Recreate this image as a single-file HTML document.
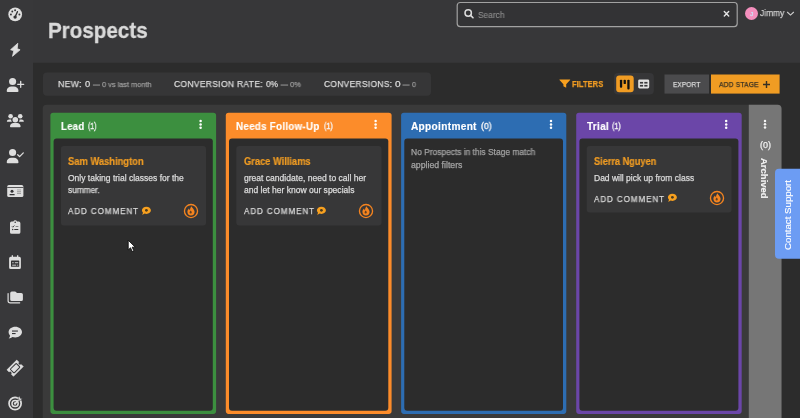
<!DOCTYPE html>
<html lang="en">
<head>
<meta charset="utf-8">
<title>Prospects</title>
<style>
*{box-sizing:border-box;margin:0;padding:0}
html,body{width:800px;height:418px;overflow:hidden;background:#2c2c2c}
body{position:relative;font-family:"Liberation Sans",sans-serif;color:#dcdcdc}
.abs{position:absolute}
.t{position:absolute;white-space:nowrap;line-height:1;transform-origin:0 50%;will-change:transform}
</style>
</head>
<body>
<svg class="abs" style="left:0;top:0" width="800" height="418" viewBox="0 0 800 418">
<rect x="0" y="0" width="800" height="418" fill="#2c2c2c"/>
<rect x="33" y="0" width="767" height="62.8" fill="#373739"/>
<rect x="0" y="0" width="33" height="418" fill="#38383a"/>
<rect x="457.2" y="2.5" width="280" height="24.1" rx="3" fill="#333335" stroke="#a2a2a2" stroke-width="1.2"/>
<rect x="43" y="72.5" width="388" height="23.2" rx="4" fill="#363637"/>
<rect x="614" y="73" width="39.8" height="21.5" rx="4" fill="#363638"/>
<rect x="616.2" y="75.6" width="17.5" height="16.7" rx="3" fill="#f09c23"/>
<rect x="664.5" y="74.5" width="44.5" height="19.1" fill="#4b4b4d"/>
<rect x="711" y="74.5" width="68.6" height="19.1" fill="#f09c23"/>
<path d="M42.7 418 V108.8 a4 4 0 0 1 4 -4 H777.5 a4 4 0 0 1 4 4 V418 Z" fill="#3a3a3a"/>
<path d="M748.8 418 V104.8 H777.5 a4 4 0 0 1 4 4 V418 Z" fill="#767676"/>
<rect x="92.9" y="84.55" width="7.1" height="1" fill="#9a9a9a"/>
<rect x="280.6" y="84.55" width="7.5" height="1" fill="#9a9a9a"/>
<rect x="402.5" y="84.55" width="7.1" height="1" fill="#9a9a9a"/>
<rect x="50.4" y="112.8" width="165.7" height="301.1" rx="2.8" fill="#3c8f3f"/>
<rect x="53.6" y="138.4" width="159.2" height="272.35" rx="3" fill="#2c2c2c"/>
<circle cx="200.6" cy="121" r="1.25" fill="#fff"/>
<circle cx="200.6" cy="124.4" r="1.25" fill="#fff"/>
<circle cx="200.6" cy="127.8" r="1.25" fill="#fff"/>
<rect x="60.9" y="145.9" width="145.1" height="79.6" rx="3" fill="#373738"/>
<rect x="225.8" y="112.8" width="165.8" height="301.1" rx="2.8" fill="#fc8c2a"/>
<rect x="229" y="138.4" width="159.3" height="272.35" rx="3" fill="#2c2c2c"/>
<circle cx="375.6" cy="121" r="1.25" fill="#fff"/>
<circle cx="375.6" cy="124.4" r="1.25" fill="#fff"/>
<circle cx="375.6" cy="127.8" r="1.25" fill="#fff"/>
<rect x="236.3" y="145.9" width="145.2" height="79.6" rx="3" fill="#373738"/>
<rect x="401.1" y="112.8" width="165.2" height="301.1" rx="2.8" fill="#2d6db2"/>
<rect x="404.3" y="138.4" width="158.7" height="272.35" rx="3" fill="#2c2c2c"/>
<circle cx="551" cy="121" r="1.25" fill="#fff"/>
<circle cx="551" cy="124.4" r="1.25" fill="#fff"/>
<circle cx="551" cy="127.8" r="1.25" fill="#fff"/>
<rect x="576.2" y="112.8" width="165.5" height="301.1" rx="2.8" fill="#6b46a8"/>
<rect x="579.4" y="138.4" width="159" height="272.35" rx="3" fill="#2c2c2c"/>
<circle cx="726.2" cy="121" r="1.25" fill="#fff"/>
<circle cx="726.2" cy="124.4" r="1.25" fill="#fff"/>
<circle cx="726.2" cy="127.8" r="1.25" fill="#fff"/>
<rect x="586.7" y="145.9" width="144.9" height="66.5" rx="3" fill="#373738"/>
<circle cx="765" cy="121" r="1.25" fill="#f4f4f4"/>
<circle cx="765" cy="124.3" r="1.25" fill="#f4f4f4"/>
<circle cx="765" cy="127.6" r="1.25" fill="#f4f4f4"/>
<rect x="775" y="168.8" width="29" height="90" rx="4" fill="#6c9cf3"/>
</svg>
<svg class="abs" id="sbicons" style="left:0;top:0" width="33" height="418" viewBox="0 0 33 418">
<g fill="#dedede" stroke="none">
<circle cx="15.2" cy="14.4" r="6.85"/>
<g fill="#333335"><circle cx="10.9" cy="14.5" r=".95"/><circle cx="12.3" cy="11.5" r=".95"/><circle cx="15.1" cy="10.3" r=".95"/><circle cx="19.4" cy="14.5" r=".95"/><circle cx="15.1" cy="17.1" r="1.7"/></g>
<path d="M15.1 17 L17.4 11.7" stroke="#333335" stroke-width="1.4" stroke-linecap="round"/>
<path d="M17.8 43.3 L10.6 49.7 L13.8 50.7 L12.5 56.3 L20.1 49.8 L17.2 48.7 Z" stroke="#dedede" stroke-width=".8" stroke-linejoin="round"/>
<circle cx="12.6" cy="81.5" r="3.55"/>
<path d="M6.7 91 c0 -3 2.2 -4.5 4.7 -4.5 h2.4 c2.5 0 4.7 1.5 4.7 4.5 a1 1 0 0 1 -1 1 h-9.8 a1 1 0 0 1 -1 -1 Z"/>
<path d="M20.7 81.3 v6 M17.7 84.3 h6" stroke="#dedede" stroke-width="1.3" fill="none" stroke-linecap="round"/>
<circle cx="10.6" cy="116.2" r="2.3"/><circle cx="20.2" cy="116.2" r="2.3"/><circle cx="15.3" cy="119.7" r="2.8"/>
<path d="M6.8 121.8 a2.4 2.4 0 0 1 2.4 -2.4 h1.9 a3.9 3.9 0 0 0 .8 2.4 Z"/>
<path d="M23.9 121.8 a2.4 2.4 0 0 0 -2.4 -2.4 h-1.9 a3.9 3.9 0 0 1 -.8 2.4 Z"/>
<path d="M10 126.6 c0 -2.3 1.6 -3.6 3.5 -3.6 h3.6 c1.9 0 3.5 1.3 3.5 3.6 a.7 .7 0 0 1 -.7 .7 h-9.2 a.7 .7 0 0 1 -.7 -.7 Z"/>
<circle cx="12.6" cy="152.5" r="3.55"/>
<path d="M6.7 162.3 c0 -3 2.2 -4.5 4.7 -4.5 h2.4 c2.5 0 4.7 1.5 4.7 4.5 a1 1 0 0 1 -1 1 h-9.8 a1 1 0 0 1 -1 -1 Z"/>
<path d="M17.7 154.7 l1.9 1.9 l3.7 -3.7" stroke="#dedede" stroke-width="1.3" fill="none" stroke-linecap="round" stroke-linejoin="round"/>
<rect x="7.2" y="185" width="16.2" height="12.1" rx="1.7"/>
<g fill="#333335"><rect x="7.2" y="187.2" width="16.2" height=".8"/><circle cx="12" cy="191.3" r="1.5"/><rect x="9.5" y="194" width="5.2" height="1.3" rx=".5"/><rect x="17" y="189.6" width="4" height=".7" opacity=".45"/><rect x="17" y="191.2" width="4" height=".7" opacity=".45"/><rect x="17" y="192.8" width="4" height=".8" opacity=".6"/></g>
<path d="M11.6 221.6 h1.8 a1.9 1.9 0 0 1 3.6 0 h1.8 a1.6 1.6 0 0 1 1.6 1.6 v9 a1.6 1.6 0 0 1 -1.6 1.6 h-7.2 a1.6 1.6 0 0 1 -1.6 -1.6 v-9 a1.6 1.6 0 0 1 1.6 -1.6 Z"/>
<g fill="#333335"><circle cx="15.2" cy="222.2" r=".8"/><rect x="15.6" y="226" width="2.8" height=".9" opacity=".6"/><rect x="14.3" y="229" width="4" height="1"/><circle cx="12.7" cy="229.5" r=".7"/></g>
<path d="M12 226.4 l.8 .8 l1.6 -1.7" stroke="#333335" stroke-width=".9" fill="none"/>
<path d="M11.7 255.2 h1.3 v1.6 h4 v-1.6 h1.3 v1.6 h1 a1.6 1.6 0 0 1 1.6 1.6 v9 a1.6 1.6 0 0 1 -1.6 1.6 h-8.6 a1.6 1.6 0 0 1 -1.6 -1.6 v-9 a1.6 1.6 0 0 1 1.6 -1.6 h1 Z"/>
<rect x="11" y="260.6" width="8.2" height="6.2" rx=".6" fill="#333335"/>
<g fill="#dedede"><rect x="12.2" y="262.3" width="1.5" height=".9"/><rect x="14.8" y="262.3" width="3.4" height=".9"/><rect x="12.2" y="264.7" width="4" height=".9"/><rect x="17.2" y="264.7" width="1" height=".9"/></g>
<path d="M11.8 291.6 h3.2 a1.4 1.4 0 0 1 1 .4 l.9 .9 h4.4 a1.6 1.6 0 0 1 1.6 1.6 v4.9 a1.6 1.6 0 0 1 -1.6 1.6 h-9.5 a1.6 1.6 0 0 1 -1.6 -1.6 v-6.2 a1.6 1.6 0 0 1 1.6 -1.6 Z"/>
<path d="M8.1 293.5 v7.2 a2.1 2.1 0 0 0 2.1 2.1 h9.5" stroke="#dedede" stroke-width="1.2" fill="none" stroke-linecap="round"/>
<path d="M15.3 326.7 c3.7 0 6.7 2.4 6.7 5.4 s-3 5.4 -6.7 5.4 c-1 0 -2 -.2 -2.9 -.5 c-.9 .7 -2.2 1.4 -3.7 1.4 c.7 -.8 1.2 -1.8 1.4 -2.7 c-.9 -.9 -1.5 -2.2 -1.5 -3.6 c0 -3 3 -5.4 6.7 -5.4 Z"/>
<g fill="#333335"><rect x="12" y="330.5" width="5.9" height="1.1"/><rect x="12" y="333" width="3.6" height="1.1"/></g>
<g transform="translate(15.1 368.2) rotate(-45)">
<path d="M-6.9 -4.6 h13.8 v2.9 a1.7 1.7 0 0 0 0 3.4 v2.9 h-13.8 v-2.9 a1.7 1.7 0 0 0 0 -3.4 Z" stroke="#dedede" stroke-width=".6" stroke-linejoin="round"/>
<rect x="-4.2" y="-2.7" width="8.4" height="5.4" rx=".7" fill="#dedede" stroke="#333335" stroke-width="1"/>
</g>
<circle cx="15.1" cy="403.5" r="6.05" fill="none" stroke="#dedede" stroke-width="1.7"/>
<circle cx="15.1" cy="403.5" r="3.1" fill="none" stroke="#dedede" stroke-width="1.5"/>
<circle cx="15.1" cy="403.5" r="1.2"/>
<path d="M15.1 403.5 L19 399.6" stroke="#dedede" stroke-width="1.5"/>
<path d="M18.1 397.6 l1.5 -1.5 l.6 2.1 l2.1 .6 l-1.5 1.5 l-2.4 -.3 Z" stroke="#39393b" stroke-width=".5"/>
</g>
</svg>

<div class="t" style="left:47.6px;top:19.82px;font-size:22.3px;color:#dadada;font-weight:bold;-webkit-text-stroke:0.3px #dadada;transform:scaleX(0.924);">Prospects</div>
<svg class="abs" style="left:462px;top:8px" width="13" height="13" viewBox="0 0 13 13"><circle cx="6.2" cy="5" r="3.2" fill="none" stroke="#dcdcdc" stroke-width="1.5"/><path d="M8.6 7.4 L11 9.8" stroke="#dcdcdc" stroke-width="1.6" stroke-linecap="round"/></svg>
<div class="t" style="left:477.8px;top:11.05px;font-size:8.8px;color:#8e8e8e;-webkit-text-stroke:0.1px #8e8e8e;transform:scaleX(0.951);">Search</div>
<svg class="abs" style="left:722px;top:9px" width="10" height="10" viewBox="0 0 10 10"><path d="M2.3 2.6 L6.7 7 M6.7 2.6 L2.3 7" stroke="#e4e4e4" stroke-width="1.4" stroke-linecap="round"/></svg>
<div class="abs" style="left:745px;top:6.800px;width:13px;height:13px;border-radius:50%;background:#f48fbd"></div>
<div class="t" style="left:750px;top:10.52px;font-size:6px;color:#cfd8f0;font-weight:bold;-webkit-text-stroke:0.25px #cfd8f0;">J</div>
<div class="t" style="left:759.8px;top:8.81px;font-size:9.2px;color:#d2d2d2;-webkit-text-stroke:0.25px #d2d2d2;transform:scaleX(0.912);">Jimmy</div>
<svg class="abs" style="left:786px;top:10.3px" width="9" height="7" viewBox="0 0 9 7"><path d="M1.2 2 L4.5 5.1 L7.8 2" fill="none" stroke="#d0d0d0" stroke-width="1.1"/></svg>
<div class="t" style="left:57.8px;top:79.6px;font-size:9.1px;color:#dcdcdc;letter-spacing:0.3px;-webkit-text-stroke:0.25px #dcdcdc;transform:scaleX(0.960);">NEW:</div>
<div class="t" style="left:85.4px;top:79.6px;font-size:9.1px;color:#dcdcdc;-webkit-text-stroke:0.25px #dcdcdc;transform:scaleX(1.027);">0</div>
<div class="t" style="left:101.8px;top:80.83px;font-size:8px;color:#9a9a9a;-webkit-text-stroke:0.25px #9a9a9a;transform:scaleX(0.920);">0 vs last month</div>
<div class="t" style="left:173.7px;top:79.6px;font-size:9.1px;color:#dcdcdc;letter-spacing:0.3px;-webkit-text-stroke:0.25px #dcdcdc;transform:scaleX(0.940);">CONVERSION RATE:</div>
<div class="t" style="left:266.1px;top:79.6px;font-size:9.1px;color:#dcdcdc;-webkit-text-stroke:0.25px #dcdcdc;transform:scaleX(0.912);">0%</div>
<div class="t" style="left:289.8px;top:80.83px;font-size:8px;color:#9a9a9a;-webkit-text-stroke:0.25px #9a9a9a;transform:scaleX(0.934);">0%</div>
<div class="t" style="left:323.5px;top:79.6px;font-size:9.1px;color:#dcdcdc;letter-spacing:0.3px;-webkit-text-stroke:0.25px #dcdcdc;transform:scaleX(0.931);">CONVERSIONS:</div>
<div class="t" style="left:394.8px;top:79.6px;font-size:9.1px;color:#dcdcdc;-webkit-text-stroke:0.25px #dcdcdc;transform:scaleX(1.106);">0</div>
<div class="t" style="left:411.7px;top:80.83px;font-size:8px;color:#9a9a9a;-webkit-text-stroke:0.25px #9a9a9a;transform:scaleX(0.876);">0</div>
<svg class="abs" style="left:559px;top:79px" width="12" height="10" viewBox="0 0 12 10"><path d="M.8 .4 h10 a.4 .4 0 0 1 .3 .7 L7.2 5.2 V8.8 L4.4 7.3 V5.2 L.5 1.1 a.4 .4 0 0 1 .3 -.7 Z" fill="#f7a01f"/></svg>
<div class="t" style="left:571.8px;top:79.8px;font-size:9.1px;color:#f09c23;font-weight:bold;-webkit-text-stroke:0.25px #f09c23;transform:scaleX(0.841);">FILTERS</div>
<svg class="abs" style="left:616px;top:75.500px" width="18" height="17" viewBox="0 0 18 17"><g fill="#111"><rect x="3.9" y="3.7" width="2.3" height="8" rx=".9"/><rect x="7.6" y="3.7" width="2.3" height="4.4" rx=".9"/><rect x="11.3" y="3.7" width="2.3" height="9.7" rx=".9"/></g></svg>
<svg class="abs" style="left:638px;top:79px" width="12" height="10" viewBox="0 0 12 10"><rect x=".2" y=".4" width="11" height="9" rx="1.4" fill="#e2e2e2"/><g fill="#3a3a3c"><rect x="1.9" y="2.9" width="3.2" height="1.7"/><rect x="6.3" y="2.9" width="3.2" height="1.7"/><rect x="1.9" y="5.9" width="3.2" height="1.7"/><rect x="6.3" y="5.9" width="3.2" height="1.7"/></g></svg>
<div class="t" style="left:672.8px;top:81.07px;font-size:7.6px;color:#dcdcdc;letter-spacing:0.3px;-webkit-text-stroke:0.25px #dcdcdc;transform:scaleX(0.835);">EXPORT</div>
<div class="t" style="left:719.4px;top:81.07px;font-size:7.6px;color:#352f24;letter-spacing:0.2px;-webkit-text-stroke:0.25px #352f24;transform:scaleX(0.881);">ADD STAGE</div>
<svg class="abs" style="left:762.1px;top:79.5px" width="9" height="9" viewBox="0 0 9 9"><path d="M4.5 1 V8 M1 4.5 H8" stroke="#352f24" stroke-width="1.4"/></svg>
<div class="t" style="left:60.7px;top:121.84px;font-size:10px;color:#fff;font-weight:bold;letter-spacing:0.3px;-webkit-text-stroke:0.15px #fff;transform:scaleX(0.953);">Lead</div>
<div class="t" style="left:87.8px;top:121.68px;font-size:9px;color:#f6f6f6;-webkit-text-stroke:0.35px #f6f6f6;transform:scaleX(0.764);">(1)</div>
<div class="t" style="left:68.2px;top:156.94px;font-size:10px;color:#f09c23;font-weight:bold;-webkit-text-stroke:0.2px #f09c23;transform:scaleX(0.936);">Sam Washington</div>
<div class="t" style="left:68.2px;top:174.2px;font-size:8.5px;color:#dcdcdc;-webkit-text-stroke:0.25px #dcdcdc;transform:scaleX(1.0);">Only taking trial classes for the</div>
<div class="t" style="left:68.2px;top:186.4px;font-size:8.5px;color:#dcdcdc;-webkit-text-stroke:0.25px #dcdcdc;transform:scaleX(0.976);">summer.</div>
<div class="t" style="left:68.2px;top:207.1px;font-size:8.5px;color:#d8d8d8;letter-spacing:1px;-webkit-text-stroke:0.25px #d8d8d8;transform:scaleX(0.943);">ADD COMMENT</div>
<svg class="abs" style="left:140.7px;top:206.3px" width="11" height="10" viewBox="0 0 11 10"><path d="M5.4 .7 c2.5 0 4.5 1.6 4.5 3.6 s-2 3.6 -4.5 3.6 c-.6 0 -1.2 -.1 -1.7 -.3 c-.7 .6 -1.6 1 -2.7 1.1 c.5 -.6 .9 -1.3 1 -2 c-.7 -.6 -1.1 -1.5 -1.1 -2.4 c0 -2 2 -3.6 4.5 -3.6 Z" fill="#f7a01f"/><circle cx="5.4" cy="4.3" r="1.4" fill="#4a3a20"/></svg>
<svg class="abs" style="left:182.9px;top:203.2px" width="16" height="16" viewBox="0 0 16 16"><circle cx="8" cy="8" r="6.550" fill="none" stroke="#f5841f" stroke-width="1.350"/><path d="M8.5 3.2 c.5 1.8 3.1 3 3.1 5.6 a3.6 3.6 0 0 1 -7.2 0 c0 -1.5 .7 -2.5 1.6 -3.3 c.1 .9 .5 1.4 1 1.7 c.1 -1.5 .5 -2.9 1.5 -4 Z" fill="#f5841f"/><path d="M7.7 7.4 c.7 .8 1.1 1.3 1.1 2 a1.1 1.1 0 0 1 -2.2 0 c0 -.7 .5 -1.2 1.1 -2 Z" fill="#3a3026" opacity=".8"/></svg>
<div class="t" style="left:236.1px;top:121.84px;font-size:10px;color:#fff;font-weight:bold;letter-spacing:0.3px;-webkit-text-stroke:0.15px #fff;transform:scaleX(0.976);">Needs Follow-Up</div>
<div class="t" style="left:323.5px;top:121.68px;font-size:9px;color:#f6f6f6;-webkit-text-stroke:0.35px #f6f6f6;transform:scaleX(0.8);">(1)</div>
<div class="t" style="left:243.6px;top:156.94px;font-size:10px;color:#f09c23;font-weight:bold;-webkit-text-stroke:0.2px #f09c23;transform:scaleX(0.930);">Grace Williams</div>
<div class="t" style="left:243.6px;top:174.2px;font-size:8.5px;color:#dcdcdc;-webkit-text-stroke:0.25px #dcdcdc;transform:scaleX(1.005);">great candidate, need to call her</div>
<div class="t" style="left:243.6px;top:186.4px;font-size:8.5px;color:#dcdcdc;-webkit-text-stroke:0.25px #dcdcdc;transform:scaleX(1.003);">and let her know our specials</div>
<div class="t" style="left:243.6px;top:207.1px;font-size:8.5px;color:#d8d8d8;letter-spacing:1px;-webkit-text-stroke:0.25px #d8d8d8;transform:scaleX(0.943);">ADD COMMENT</div>
<svg class="abs" style="left:316.1px;top:206.3px" width="11" height="10" viewBox="0 0 11 10"><path d="M5.4 .7 c2.5 0 4.5 1.6 4.5 3.6 s-2 3.6 -4.5 3.6 c-.6 0 -1.2 -.1 -1.7 -.3 c-.7 .6 -1.6 1 -2.7 1.1 c.5 -.6 .9 -1.3 1 -2 c-.7 -.6 -1.1 -1.5 -1.1 -2.4 c0 -2 2 -3.6 4.5 -3.6 Z" fill="#f7a01f"/><circle cx="5.4" cy="4.3" r="1.4" fill="#4a3a20"/></svg>
<svg class="abs" style="left:358.3px;top:203.2px" width="16" height="16" viewBox="0 0 16 16"><circle cx="8" cy="8" r="6.550" fill="none" stroke="#f5841f" stroke-width="1.350"/><path d="M8.5 3.2 c.5 1.8 3.1 3 3.1 5.6 a3.6 3.6 0 0 1 -7.2 0 c0 -1.5 .7 -2.5 1.6 -3.3 c.1 .9 .5 1.4 1 1.7 c.1 -1.5 .5 -2.9 1.5 -4 Z" fill="#f5841f"/><path d="M7.7 7.4 c.7 .8 1.1 1.3 1.1 2 a1.1 1.1 0 0 1 -2.2 0 c0 -.7 .5 -1.2 1.1 -2 Z" fill="#3a3026" opacity=".8"/></svg>
<div class="t" style="left:411.4px;top:121.84px;font-size:10px;color:#fff;font-weight:bold;letter-spacing:0.3px;-webkit-text-stroke:0.15px #fff;transform:scaleX(1.013);">Appointment</div>
<div class="t" style="left:480.6px;top:121.68px;font-size:9px;color:#f6f6f6;-webkit-text-stroke:0.35px #f6f6f6;transform:scaleX(0.964);">(0)</div>
<div class="t" style="left:411.4px;top:148.3px;font-size:8.5px;color:#a4a4a4;-webkit-text-stroke:0.25px #a4a4a4;transform:scaleX(0.988);">No Prospects in this Stage match</div>
<div class="t" style="left:411.4px;top:161.2px;font-size:8.5px;color:#a4a4a4;-webkit-text-stroke:0.25px #a4a4a4;transform:scaleX(1.028);">applied filters</div>
<div class="t" style="left:586.5px;top:121.84px;font-size:10px;color:#fff;font-weight:bold;letter-spacing:0.3px;-webkit-text-stroke:0.15px #fff;transform:scaleX(0.992);">Trial</div>
<div class="t" style="left:611.9px;top:121.68px;font-size:9px;color:#f6f6f6;-webkit-text-stroke:0.35px #f6f6f6;transform:scaleX(0.791);">(1)</div>
<div class="t" style="left:594px;top:156.94px;font-size:10px;color:#f09c23;font-weight:bold;-webkit-text-stroke:0.2px #f09c23;transform:scaleX(0.917);">Sierra Nguyen</div>
<div class="t" style="left:594px;top:174.2px;font-size:8.5px;color:#dcdcdc;-webkit-text-stroke:0.25px #dcdcdc;transform:scaleX(0.999);">Dad will pick up from class</div>
<div class="t" style="left:594px;top:194.8px;font-size:8.5px;color:#d8d8d8;letter-spacing:1px;-webkit-text-stroke:0.25px #d8d8d8;transform:scaleX(0.943);">ADD COMMENT</div>
<svg class="abs" style="left:666.5px;top:193.2px" width="11" height="10" viewBox="0 0 11 10"><path d="M5.4 .7 c2.5 0 4.5 1.6 4.5 3.6 s-2 3.6 -4.5 3.6 c-.6 0 -1.2 -.1 -1.7 -.3 c-.7 .6 -1.6 1 -2.7 1.1 c.5 -.6 .9 -1.3 1 -2 c-.7 -.6 -1.1 -1.5 -1.1 -2.4 c0 -2 2 -3.6 4.5 -3.6 Z" fill="#f7a01f"/><circle cx="5.4" cy="4.3" r="1.4" fill="#4a3a20"/></svg>
<svg class="abs" style="left:708.7px;top:190.1px" width="16" height="16" viewBox="0 0 16 16"><circle cx="8" cy="8" r="6.550" fill="none" stroke="#f5841f" stroke-width="1.350"/><path d="M8.5 3.2 c.5 1.8 3.1 3 3.1 5.6 a3.6 3.6 0 0 1 -7.2 0 c0 -1.5 .7 -2.5 1.6 -3.3 c.1 .9 .5 1.4 1 1.7 c.1 -1.5 .5 -2.9 1.5 -4 Z" fill="#f5841f"/><path d="M7.7 7.4 c.7 .8 1.1 1.3 1.1 2 a1.1 1.1 0 0 1 -2.2 0 c0 -.7 .5 -1.2 1.1 -2 Z" fill="#3a3026" opacity=".8"/></svg>
<div class="t" style="left:760px;top:140.95px;font-size:8.8px;color:#f0f0f0;-webkit-text-stroke:0.25px #f0f0f0;transform:scaleX(1.022);">(0)</div>
<div class="t" style="left:769px;top:158px;font-size:9.5px;font-weight:bold;color:#f2f2f2;-webkit-text-stroke:.2px #f2f2f2;transform-origin:0 0;transform:rotate(90deg)">Archived</div>
<div class="t" style="left:782.5px;top:250px;font-size:9.7px;color:#fff;-webkit-text-stroke:.15px #fff;transform-origin:0 0;transform:rotate(-90deg)">Contact Support</div>
<svg class="abs" style="left:127px;top:239px" width="10" height="14" viewBox="0 0 10 14"><path d="M1.2 1.2 V11 L3.5 8.8 L5.2 12.6 L6.9 11.8 L5.2 8.2 H8.3 Z" fill="#fff" stroke="#111" stroke-width=".9" stroke-linejoin="round"/></svg>
</body>
</html>
